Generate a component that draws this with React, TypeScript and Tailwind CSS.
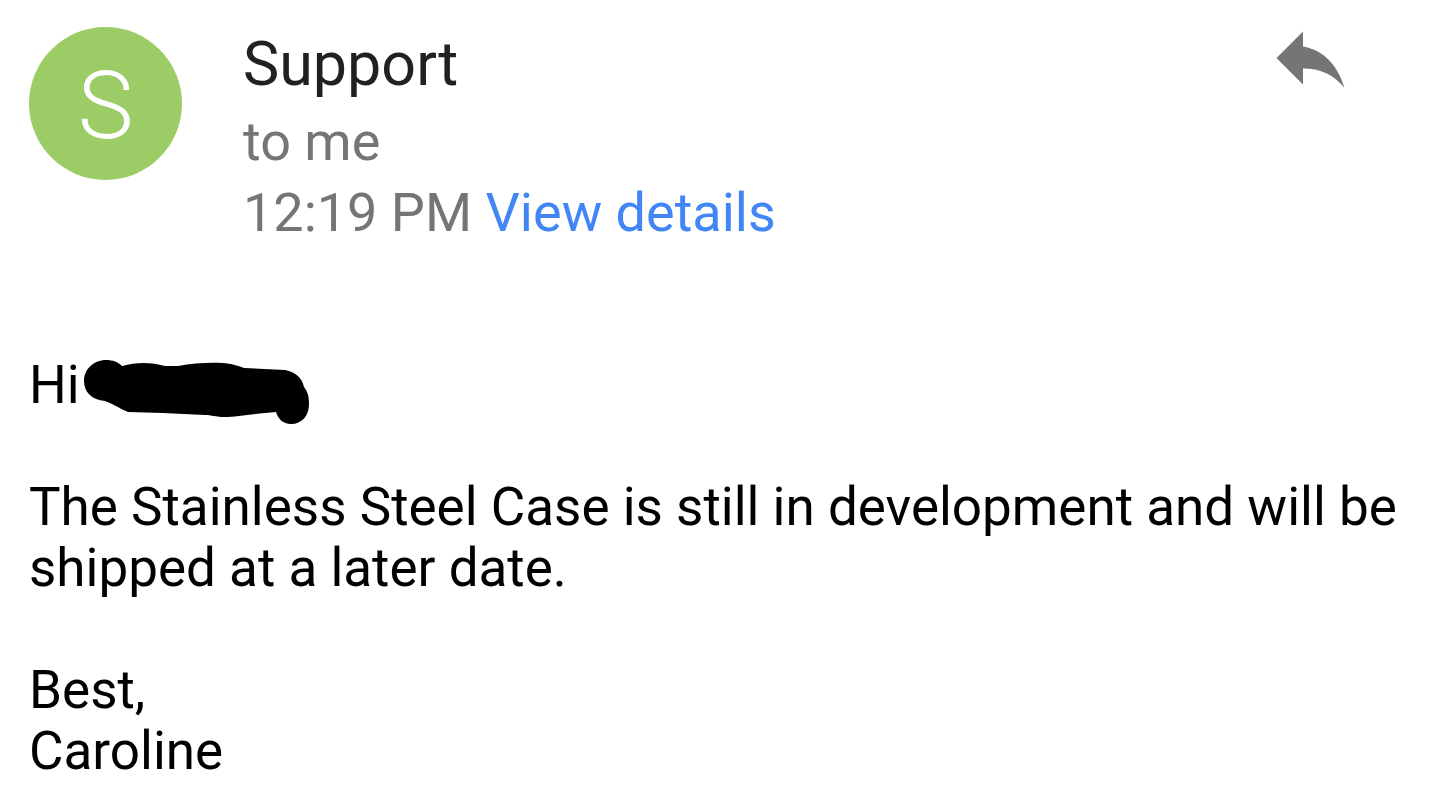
export default function App() {
  return (
    <main className="min-h-screen bg-white px-[29px] pt-[27px] font-['Roboto',sans-serif] text-black">
      <header className="flex items-start">
        <div className="flex size-[153px] shrink-0 items-center justify-center rounded-full bg-[#9ccc65] pt-1.5 text-[94px] font-light text-white">
          S
        </div>
        <div className="ml-[61px] flex-1 text-[54px] leading-[71px] text-[#757575]">
          <h1 className="mb-[5px] text-[61px] leading-[74px] font-normal text-[#212121]">Support</h1>
          <p>to me</p>
          <p>
            12:19 PM{" "}
            <a href="#details" className="text-[#4285f4]">View details</a>
          </p>
        </div>
        <button type="button" aria-label="Reply" className="mt-1 mr-[66px]">
          <svg viewBox="0 0 69 57" className="h-[57px] w-[69px]" fill="#757575">
            <path d="M27 0.5V15.5C48 19 62 35 68.5 57C59 45 46 37.5 27 37.5V53.5L0.5 27Z" />
          </svg>
        </button>
      </header>
      <article className="mt-[107px] text-[53px] leading-[61px]">
        <div className="flex h-[61px] items-start">
          <span>Hi</span>
          <svg viewBox="84 355 226 69" className="ml-1 h-[69px] w-[226px] shrink-0" role="img" aria-label="Redacted name">
            <path d="M106 360C113 360 118 362 122 366C136 362 151 362 165 366H178C198 362 220 362 231 364C236 365 241 367 244 368L285 370C296 372 302 378 304 387C308 392 309 397 309 404C309 416 302 424 291 424C283 424 278 419 276 412C258 413 237 417 225 417C216 417 211 415 205 415L163 413L128 412C119 408 111 403 105 401C92 400 84 392 84 381C84 369 94 360 106 360Z" />
          </svg>
        </div>
        <p className="mt-[61px]">The Stainless Steel Case is still in development and will be shipped at a later date.</p>
        <p className="mt-[61px]">Best,<br />Caroline</p>
      </article>
    </main>
  );
}
